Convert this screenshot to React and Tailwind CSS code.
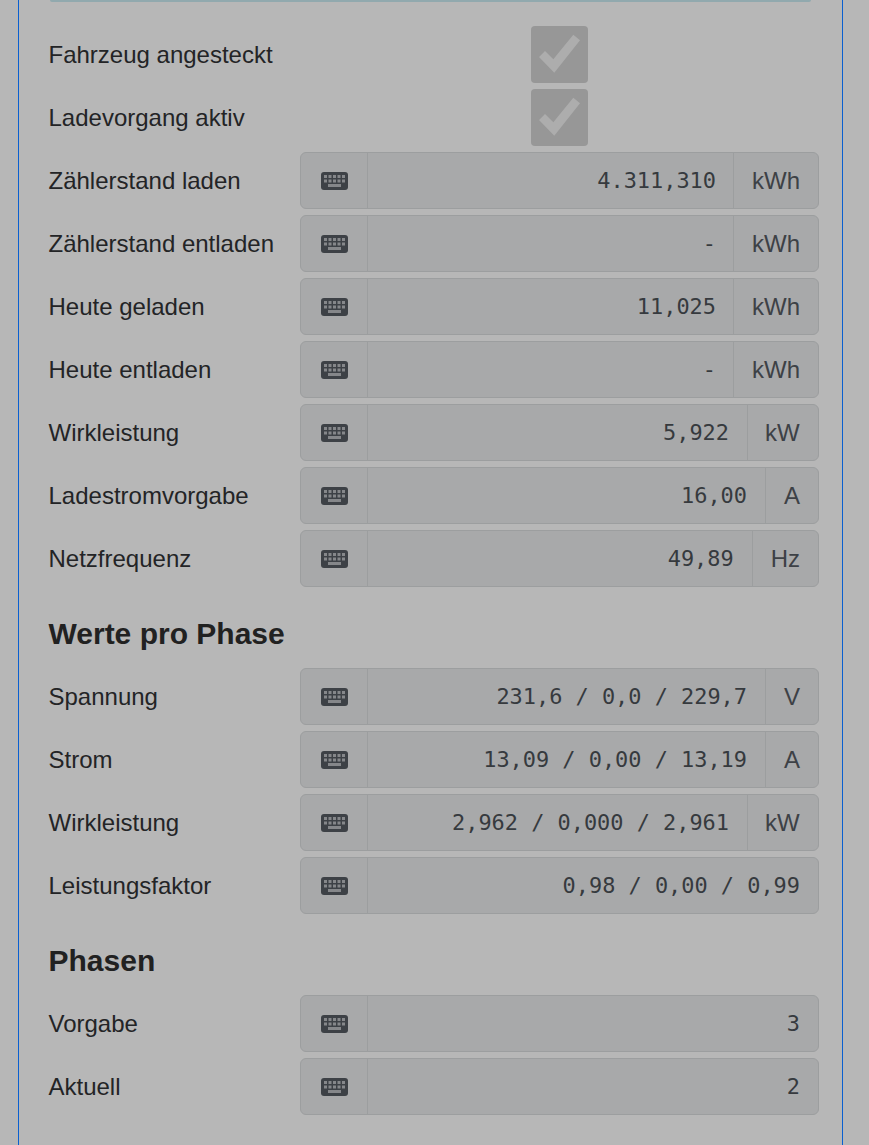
import React from "react";

const mainRows = [
  { label: "Zählerstand laden", value: "4.311,310", unit: "kWh" },
  { label: "Zählerstand entladen", value: "-", unit: "kWh" },
  { label: "Heute geladen", value: "11,025", unit: "kWh" },
  { label: "Heute entladen", value: "-", unit: "kWh" },
  { label: "Wirkleistung", value: "5,922", unit: "kW" },
  { label: "Ladestromvorgabe", value: "16,00", unit: "A" },
  { label: "Netzfrequenz", value: "49,89", unit: "Hz" },
];

const phaseRows = [
  { label: "Spannung", value: "231,6 / 0,0 / 229,7", unit: "V" },
  { label: "Strom", value: "13,09 / 0,00 / 13,19", unit: "A" },
  { label: "Wirkleistung", value: "2,962 / 0,000 / 2,961", unit: "kW" },
  { label: "Leistungsfaktor", value: "0,98 / 0,00 / 0,99" },
];

const phasesRows = [
  { label: "Vorgabe", value: "3" },
  { label: "Aktuell", value: "2" },
];

const keyColumns = [3, 7.5, 12, 16.5, 21];

const KeyboardIcon = () => (
  <svg width="27" height="18" viewBox="0 0 27 18">
    <rect width="27" height="18" rx="3" fill="#3d4146" />
    {keyColumns.map((x) => (
      <React.Fragment key={x}>
        <rect x={x} y="3" width="3" height="3" fill="#85878a" />
        <rect x={x} y="7.5" width="3" height="3" fill="#85878a" />
      </React.Fragment>
    ))}
    <rect x="7" y="12" width="13" height="3" fill="#85878a" />
  </svg>
);

const CheckIcon = () => (
  <svg width="57" height="57" viewBox="0 0 57 57">
    <polygon
      points="8,31 23.3,46.7 49,14.3 42.3,8.7 22.3,33.3 14,25"
      fill="#adadad"
    />
  </svg>
);

const CheckRow = ({ label }) => (
  <div className="flex h-[57px] items-center">
    <div className="w-[251.5px] shrink-0">{label}</div>
    <div className="flex w-[519px] justify-center">
      <div className="h-[57px] w-[57px] rounded-[4px] bg-[#979797]">
        <CheckIcon />
      </div>
    </div>
  </div>
);

const ValueRow = ({ label, value, unit }) => (
  <div className="flex h-[57px] items-center">
    <div className="w-[251.5px] shrink-0">{label}</div>
    <div className="flex h-[57px] w-[519px] items-stretch rounded-[6px] border border-[#9c9e9f] bg-[#a8a9aa] text-[#3d4146]">
      <div className="flex w-[67px] shrink-0 items-center justify-center border-r border-[#9c9e9f]">
        <KeyboardIcon />
      </div>
      <div
        className={`flex-1 pl-[18px] text-right font-['DejaVu_Sans_Mono',monospace] text-[21.92px] leading-[55px] text-[#363a3e] ${
          unit === "kWh" ? "pr-[17px]" : "pr-[18px]"
        }`}
      >
        {value}
      </div>
      {unit && (
        <div
          className={`flex items-center border-l border-[#9c9e9f] ${
            unit === "kW" ? "w-[71px] pl-[17px]" : "px-[18px]"
          }`}
        >
          {unit}
        </div>
      )}
    </div>
  </div>
);

const Heading = ({ children }) => (
  <h3 className="text-[30px] font-bold leading-[36px] text-[#212121]">
    {children}
  </h3>
);

export default function App() {
  return (
    <div className="h-[1145px] overflow-hidden bg-[#b7b7b7] px-[18px] font-['Liberation_Sans',sans-serif] text-[24px] text-[#232426]">
      <div className="h-[1145px] w-[825px] border-x border-[#0a5fd0] pl-[29.5px]">
        <div className="ml-[1.5px] h-[2px] w-[761px] rounded-b-[6px] bg-[#91a9ae]" />
        <div className="mt-[24px] flex flex-col gap-[6px]">
          <CheckRow label="Fahrzeug angesteckt" />
          <CheckRow label="Ladevorgang aktiv" />
          {mainRows.map((row) => (
            <ValueRow key={row.label} {...row} />
          ))}
        </div>
        <div className="mt-[29px] mb-[16px]">
          <Heading>Werte pro Phase</Heading>
        </div>
        <div className="flex flex-col gap-[6px]">
          {phaseRows.map((row) => (
            <ValueRow key={row.label} {...row} />
          ))}
        </div>
        <div className="mt-[29px] mb-[16px]">
          <Heading>Phasen</Heading>
        </div>
        <div className="flex flex-col gap-[6px]">
          {phasesRows.map((row) => (
            <ValueRow key={row.label} {...row} />
          ))}
        </div>
      </div>
    </div>
  );
}
